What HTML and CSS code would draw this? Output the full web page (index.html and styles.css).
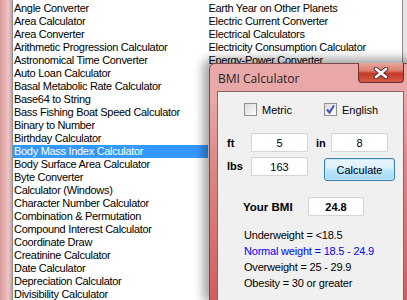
FILE: index.html
```html
<!DOCTYPE html>
<html lang="en">
<head>
    <meta charset="UTF-8">
    <title>Calculators</title>
    <link rel="stylesheet" href="styles.css">
</head>
<body>
    <div id="app">
        <div class="frame-left"></div>
        <div id="tool-list">
            <ul class="col">
                <li>Angle Converter</li>
                <li>Area Calculator</li>
                <li>Area Converter</li>
                <li>Arithmetic Progression Calculator</li>
                <li>Astronomical Time Converter</li>
                <li>Auto Loan Calculator</li>
                <li>Basal Metabolic Rate Calculator</li>
                <li>Base64 to String</li>
                <li>Bass Fishing Boat Speed Calculator</li>
                <li>Binary to Number</li>
                <li>Birthday Calculator</li>
                <li class="selected">Body Mass Index Calculator</li>
                <li>Body Surface Area Calculator</li>
                <li>Byte Converter</li>
                <li>Calculator (Windows)</li>
                <li>Character Number Calculator</li>
                <li>Combination &amp; Permutation</li>
                <li>Compound Interest Calculator</li>
                <li>Coordinate Draw</li>
                <li>Creatinine Calculator</li>
                <li>Date Calculator</li>
                <li>Depreciation Calculator</li>
                <li>Divisibility Calculator</li>
            </ul>
            <ul class="col">
                <li>Earth Year on Other Planets</li>
                <li>Electric Current Converter</li>
                <li>Electrical Calculators</li>
                <li>Electricity Consumption Calculator</li>
                <li>Energy-Power Converter</li>
            </ul>
        </div>
        <div class="frame-right"></div>
    </div>

    <!-- BMI dialog window -->
    <div id="bmi-dialog">
        <div class="title-bar">
            <span class="title">BMI Calculator</span>
            <div class="close-btn">
                <svg width="16" height="12" viewBox="0 0 16 12">
                    <path d="M3 2 L13 10 M13 2 L3 10" stroke="#5a2a2a" stroke-width="4.5" stroke-linecap="round"/>
                    <path d="M3 2 L13 10 M13 2 L3 10" stroke="#fff" stroke-width="2.6" stroke-linecap="round"/>
                </svg>
            </div>
        </div>
        <div class="client">
            <div class="units">
                <label class="check-item metric"><span class="check-box"></span>Metric</label>
                <label class="check-item"><span class="check-box">
                    <svg width="11" height="11" viewBox="0 0 11 11"><path d="M2 5.5 L4.5 8.5 L9 1.5" stroke="#3b57b5" stroke-width="2" fill="none"/></svg>
                </span>English</label>
            </div>
            <div class="form-row first">
                <span class="lbl">ft</span>
                <input type="text" class="field" value="5">
                <span class="lbl in">in</span>
                <input type="text" class="field" value="8">
            </div>
            <div class="form-row second">
                <span class="lbl">lbs</span>
                <input type="text" class="field" value="163">
                <button class="calc-btn">Calculate</button>
            </div>
            <div class="bmi-row">
                <span class="lbl bmi-lbl">Your BMI</span>
                <input type="text" class="field bmi-value" value="24.8">
            </div>
            <div class="legend">
                <p>Underweight = &lt;18.5</p>
                <p class="normal">Normal weight = 18.5 - 24.9</p>
                <p>Overweight = 25 - 29.9</p>
                <p>Obesity = 30 or greater</p>
            </div>
        </div>
    </div>
</body>
</html>
```

FILE: styles.css
```css
body {
    margin: 0;
    width: 407px;
    height: 300px;
    overflow: hidden;
    position: relative;
    font-family: "Liberation Sans", Arial, sans-serif;
    font-size: 11px;
    color: #000;
    background-color: #f0f0f0;
}

#app {
    display: flex;
    height: 300px;
}

.frame-left {
    width: 12px;
    background: linear-gradient(to right, #d99a9a, #eec3c3 70%, #c9a0a0);
    border-right: 1px solid #8c8f96;
}

.frame-right {
    flex: 1;
    background-color: #e9e4e4;
    border-left: 1px solid #8c8f96;
}

#tool-list {
    width: 389px;
    background-color: #fff;
    display: flex;
    padding-top: 2px;
    overflow: hidden;
}

.col {
    list-style: none;
    margin: 0;
    padding: 0;
    width: 196px;
}

.col li {
    height: 13px;
    line-height: 13px;
    padding-left: 1px;
    white-space: nowrap;
    letter-spacing: -0.3px;
}

.col li.selected {
    background-color: #3399ff;
    color: #fff;
}

/* dialog */
#bmi-dialog {
    position: absolute;
    left: 209px;
    top: 63px;
    width: 187px;
    height: 236px;
    padding: 0 7px;
    border: 1px solid #7a4a4a;
    border-bottom: none;
    border-radius: 6px 6px 0 0;
    background: linear-gradient(to bottom, #eaa9a9 0%, #e9a7a7 15%, #dc8585 45%, #cf5f5f 100%);
    box-shadow: -3px -2px 10px 3px rgba(0, 0, 0, 0.35);
}

.title-bar {
    height: 27px;
    display: flex;
    align-items: center;
    position: relative;
}

.title {
    font-family: "Open Sans", "Noto Sans", sans-serif;
    font-size: 12px;
    color: #1e1e1e;
    padding-left: 1px;
    margin-top: 1px;
}

.close-btn {
    position: absolute;
    top: -1px;
    right: 0;
    width: 44px;
    height: 19px;
    border: 1px solid #6a3030;
    border-top: none;
    border-radius: 0 0 4px 4px;
    background: linear-gradient(to bottom, #e8a69e 0%, #dd8070 40%, #c53a28 55%, #d75a48 100%);
    display: flex;
    align-items: center;
    justify-content: center;
}

.client {
    height: 208px;
    background-color: #f0f0f0;
    border: 1px solid #8d6464;
    border-bottom: none;
}

.units {
    display: flex;
    padding: 11px 0 0 26px;
}

.check-item {
    display: flex;
    align-items: center;
    gap: 5px;
    height: 13px;
}

.check-item.metric {
    width: 80px;
}

.check-box {
    width: 11px;
    height: 11px;
    border: 1px solid #8e8f8f;
    background: linear-gradient(135deg, #dcdcdc, #fcfcfc);
    display: flex;
    align-items: center;
    justify-content: center;
}

.form-row {
    display: flex;
    align-items: center;
    padding-left: 9px;
}

.form-row.first {
    margin-top: 17px;
}

.form-row.second {
    margin-top: 5px;
    align-items: flex-start;
}

.form-row.second .lbl {
    line-height: 18px;
}

.lbl {
    font-weight: bold;
    width: 24px;
}

.lbl.in {
    margin-left: 8px;
    width: 15px;
}

.field {
    box-sizing: border-box;
    width: 57px;
    height: 19px;
    border: 1px solid #d5d5d5;
    background: #fff;
    font-family: "Liberation Sans", Arial, sans-serif;
    font-size: 11px;
    text-align: center;
    padding: 0;
    margin: 0;
    outline: none;
}

.calc-btn {
    box-sizing: border-box;
    margin-left: 16px;
    margin-top: 1px;
    width: 71px;
    height: 23px;
    border: 1px solid #3c7fb1;
    border-radius: 3px;
    background: linear-gradient(to bottom, #eaf6fd 0%, #d9f0fc 45%, #bee6fd 50%, #a7d9f5 100%);
    box-shadow: inset 0 0 0 1px #c6eafd;
    font-family: "Liberation Sans", Arial, sans-serif;
    font-size: 11px;
    color: #000;
    padding: 0;
}

.bmi-row {
    display: flex;
    align-items: center;
    margin-top: 16px;
    padding-left: 25px;
}

.bmi-lbl {
    width: 65px;
    font-size: 11.5px;
}

.bmi-value {
    width: 56px;
    font-weight: bold;
}

.legend {
    margin-top: 11px;
    padding-left: 26px;
}

.legend p {
    margin: 0;
    height: 16px;
    line-height: 16px;
    letter-spacing: -0.2px;
}

.legend p.normal {
    color: #0000ff;
}
```
